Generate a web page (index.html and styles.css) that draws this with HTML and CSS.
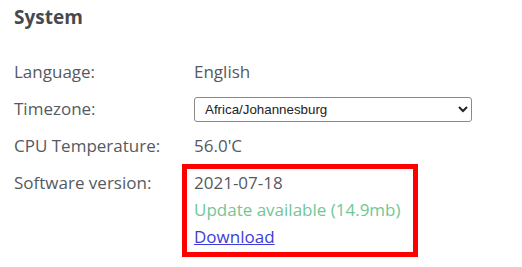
FILE: index.html
```html
<!DOCTYPE html>
<html>
<head>
<meta charset="utf-8">
<link rel="stylesheet" href="styles.css">
</head>
<body>
<section class="panel">
  <h2 class="title">System</h2>
  <div class="fields">
    <div class="label">Language:</div>
    <div class="value">English</div>
    <div class="label">Timezone:</div>
    <div class="value">
      <select class="tz">
        <option>Africa/Johannesburg</option>
      </select>
    </div>
    <div class="label">CPU Temperature:</div>
    <div class="value">56.0'C</div>
    <div class="label">Software version:</div>
    <div class="value version">
      <div>2021-07-18</div>
      <div class="update">Update available (14.9mb)</div>
      <div><a class="link" href="#">Download</a></div>
    </div>
  </div>
</section>
</body>
</html>
```
FILE: styles.css
```css
html, body {
  margin: 0;
  padding: 0;
  background: #ffffff;
  min-height: 100vh;
}
.panel {
  padding: 4px 14px 20px 14px;
  font-family: "Open Sans", "Noto Sans", sans-serif;
  color: #555a5f;
}
.title {
  margin: 0;
  font-size: 19px;
  line-height: 27px;
  font-weight: 700;
  color: #454a50;
}
.fields {
  margin-top: 27px;
  display: grid;
  grid-template-columns: 180px 278px;
  row-gap: 10px;
  font-size: 17px;
  line-height: 27px;
}
.label,
.value {
  min-height: 27px;
}
.tz {
  display: block;
  width: 278px;
  height: 25px;
  margin: 2px 0 0 0;
  font-family: "Liberation Sans", Arial, sans-serif;
  font-size: 13.33px;
  color: #222;
  background: #fff;
  border: 1px solid #8a8a8a;
  border-radius: 3px;
  padding: 0 6px;
}
.version {
  position: relative;
}
.version::after {
  content: "";
  position: absolute;
  left: -12px;
  top: -5px;
  width: 236px;
  height: 93px;
  box-sizing: border-box;
  border: 5px solid #ff0000;
  pointer-events: none;
}
.update {
  color: #72c696;
}
.link {
  color: #3d3dd6;
  text-decoration: underline;
}
```
